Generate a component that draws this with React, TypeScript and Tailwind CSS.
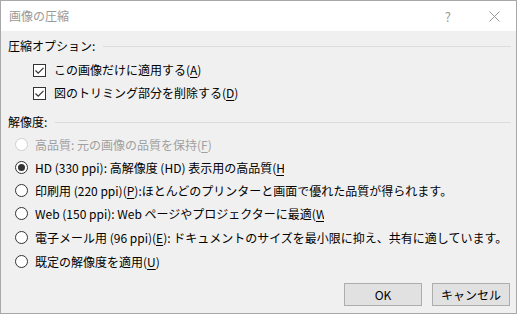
import { ReactNode } from "react";

const font = { fontFamily: '"Noto Sans CJK JP", "Noto Sans", sans-serif' };

function Mn({ children }: { children: ReactNode }) {
  return <span className="underline underline-offset-2">{children}</span>;
}

function CheckBox() {
  return (
    <span className="flex h-[13px] w-[13px] shrink-0 items-center justify-center border border-[#333] bg-white">
      <svg width="11" height="11" viewBox="0 0 11 11">
        <path d="M1.5 5.5 L4.2 8.2 L9.5 2.8" fill="none" stroke="#333" strokeWidth="1.2" />
      </svg>
    </span>
  );
}

function Radio({ checked = false, disabled = false }: { checked?: boolean; disabled?: boolean }) {
  return (
    <span
      className={
        "flex h-[13px] w-[13px] shrink-0 items-center justify-center rounded-full border bg-white " +
        (disabled ? "border-[#cfcfcf]" : "border-[#333]")
      }
    >
      {checked && <span className="h-[7px] w-[7px] rounded-full bg-[#333]" />}
    </span>
  );
}

function Section({ title }: { title: string }) {
  return (
    <div className="flex h-5 items-center">
      <span className="pl-[7px] text-black">{title}</span>
      <div className="ml-[8px] mr-[5px] h-px flex-1 bg-[#dcdcdc]" />
    </div>
  );
}

function RadioRow({
  children,
  checked,
  disabled,
  h = "h-[23px]",
  clip,
}: {
  children: ReactNode;
  checked?: boolean;
  disabled?: boolean;
  h?: string;
  clip?: string;
}) {
  return (
    <div className={"flex items-center pl-[14px] " + h}>
      <Radio checked={checked} disabled={disabled} />
      <span
        className={
          "ml-[7px] block overflow-hidden whitespace-nowrap leading-[17px] " +
          (clip ?? "") +
          (disabled ? " text-[#a0a0a0]" : " text-black")
        }
      >
        {children}
      </span>
    </div>
  );
}

export default function App() {
  return (
    <div className="h-[315px] w-[517px] bg-white text-[12px] leading-none" style={font}>
      <div className="flex h-[314px] w-[517px] flex-col border border-[#a8a8a8] bg-[#f0f0f0]">
        {/* title bar */}
        <div className="flex h-[30px] items-center bg-white">
          <span className="pl-[8px] text-[12px] text-[#999]">画像の圧縮</span>
          <span className="ml-auto mr-[38px] text-[13px] text-[#999]">?</span>
          <svg className="mr-[16px]" width="11" height="11" viewBox="0 0 11 11">
            <path d="M0.5 0.5 L10.5 10.5 M10.5 0.5 L0.5 10.5" stroke="#999" strokeWidth="1" />
          </svg>
        </div>

        <div className="flex flex-1 flex-col pt-[5px]">
          <Section title="圧縮オプション:" />
          <div className="mt-[4px] flex h-5 items-center gap-[8px] pl-[32px]">
            <CheckBox />
            <span>
              この画像だけに適用する(<Mn>A</Mn>)
            </span>
          </div>
          <div className="mt-[3px] flex h-5 items-center gap-[8px] pl-[32px]">
            <CheckBox />
            <span>
              図のトリミング部分を削除する(<Mn>D</Mn>)
            </span>
          </div>

          <div className="mt-[9px]">
            <Section title="解像度:" />
          </div>
          <div className="mt-px">
            <RadioRow disabled>
              高品質: 元の画像の品質を保持(<Mn>F</Mn>)
            </RadioRow>
            <RadioRow checked clip="w-[249px]">
              HD (330 ppi): 高解像度 (HD) 表示用の高品質(<Mn>H</Mn>)
            </RadioRow>
            <RadioRow>
              印刷用 (220 ppi)(<Mn>P</Mn>):ほとんどのプリンターと画面で優れた品質が得られます。
            </RadioRow>
            <RadioRow clip="w-[289px]">
              Web (150 ppi): Web ページやプロジェクターに最適(<Mn>W</Mn>)
            </RadioRow>
            <RadioRow h="h-[24px]">
              電子メール用 (96 ppi)(<Mn>E</Mn>): ドキュメントのサイズを最小限に抑え、共有に適しています。
            </RadioRow>
            <RadioRow h="h-[24px]">
              既定の解像度を適用(<Mn>U</Mn>)
            </RadioRow>
          </div>

          <div className="mt-[10px] flex justify-end gap-[10px] pr-[6px]">
            <button className="flex h-[23px] w-[78px] items-center justify-center border border-[#adadad] bg-[#e1e1e1] text-black">
              OK
            </button>
            <button className="flex h-[23px] w-[78px] items-center justify-center border border-[#adadad] bg-[#e1e1e1] text-black">
              キャンセル
            </button>
          </div>
        </div>
      </div>
    </div>
  );
}
